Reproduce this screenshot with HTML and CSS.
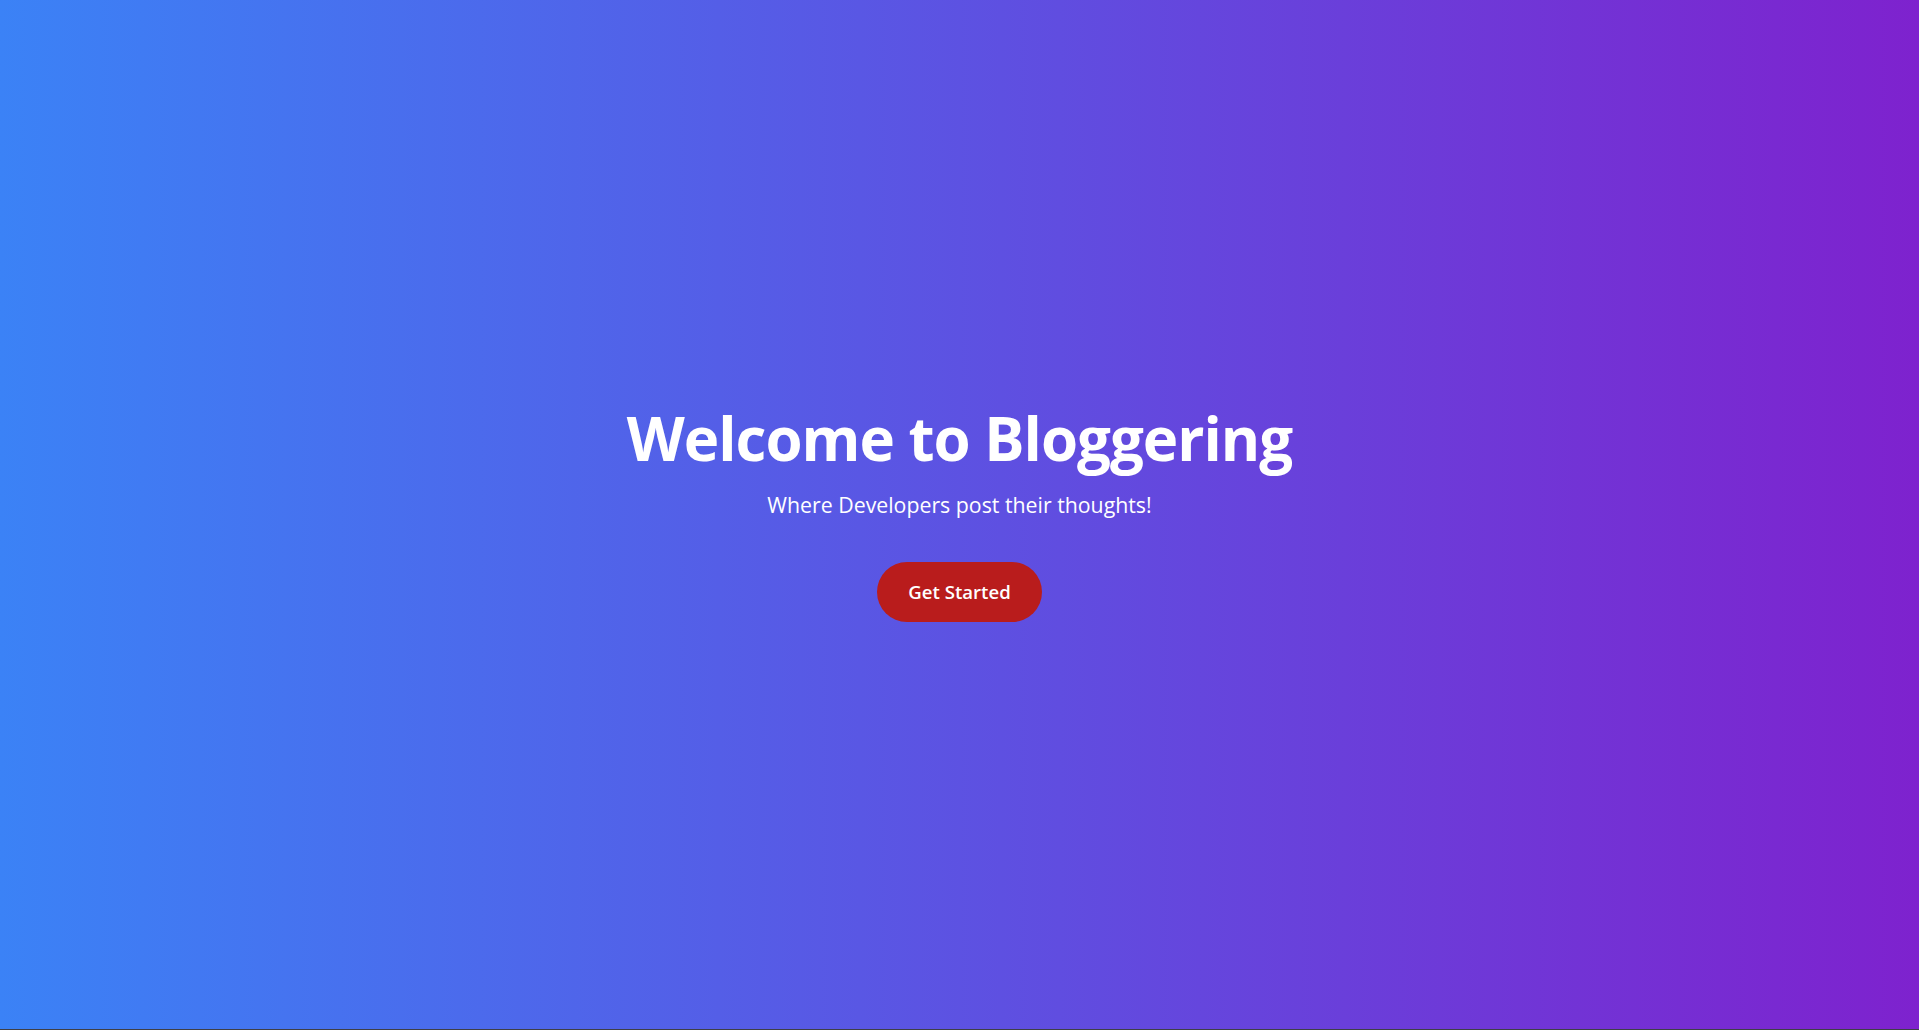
FILE: index.html
```html
<!DOCTYPE html>
<html lang="en">
<head>
<meta charset="utf-8">
<title>Bloggering</title>
<link rel="stylesheet" href="styles.css">
</head>
<body>
<section class="hero">
  <h1 class="hero-title">Welcome to Bloggering</h1>
  <p class="hero-subtitle">Where Developers post their thoughts!</p>
  <a class="hero-button" href="#">Get Started</a>
</section>
</body>
</html>
```
FILE: styles.css
```css
* { box-sizing: border-box; }
html, body { margin: 0; padding: 0; }
body {
  background: #3f3f46;
  font-family: "Open Sans", "Noto Sans", sans-serif;
  height: 1030px;
  overflow: hidden;
}
.hero {
  height: 1029px;
  background: linear-gradient(to right, #3b82f6, #7e22ce);
  display: flex;
  flex-direction: column;
  align-items: center;
  justify-content: center;
  color: #fff;
  text-align: center;
}
.hero-title {
  margin: 0 0 21px;
  font-size: 60px;
  line-height: 1;
  font-weight: 700;
  letter-spacing: -1px;
}
.hero-subtitle {
  margin: 0 0 41px;
  font-size: 21.3px;
  line-height: 32px;
}
.hero-button {
  display: inline-block;
  background: #b91c1c;
  color: #fff;
  text-decoration: none;
  font-size: 18.6px;
  font-weight: 600;
  line-height: 28px;
  padding: 16px 31px;
  border-radius: 9999px;
}
```
